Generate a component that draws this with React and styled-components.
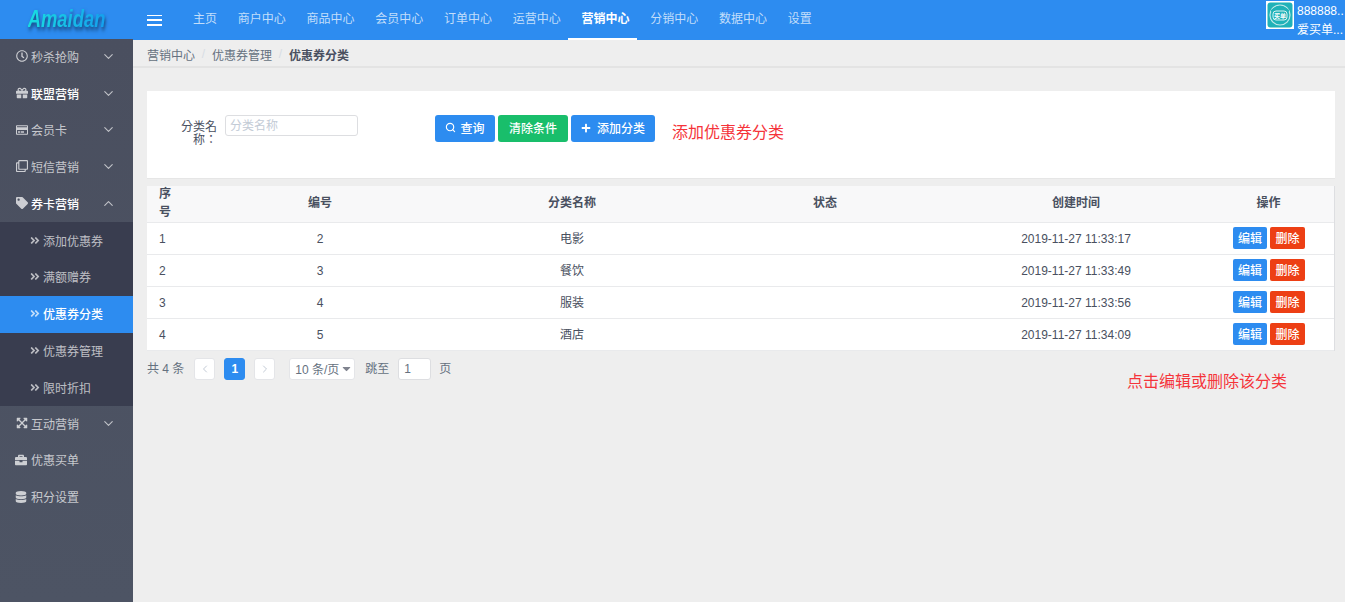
import styled, { createGlobalStyle } from "styled-components";
import {
  FaRegClock,
  FaGift,
  FaRegCreditCard,
  FaRegClone,
  FaTag,
  FaExpandArrowsAlt,
  FaBriefcase,
  FaDatabase,
  FaAngleDoubleRight,
  FaPlus,
  FaCaretDown,
} from "react-icons/fa";
import { ChevronDown, ChevronUp, ChevronLeft, ChevronRight, Search } from "lucide-react";

const GlobalStyle = createGlobalStyle`
  html, body {
    margin: 0;
    padding: 0;
    height: 100%;
    overflow: hidden;
    background: #eeeeee;
    font-family: "Liberation Sans", "Noto Sans CJK SC", sans-serif;
    font-size: 12px;
    color: #495060;
  }
  * {
    box-sizing: border-box;
  }
`;

const Page = styled.div`
  width: 1345px;
  height: 602px;
  display: flex;
  flex-direction: column;
`;

const TopBar = styled.header`
  height: 40px;
  flex: none;
  background: #2d8cf0;
  display: flex;
  align-items: center;
  margin-bottom: -1px;
  position: relative;
  z-index: 0;
`;

const LogoBox = styled.div`
  width: 133px;
  height: 39px;
  flex: none;
  align-self: flex-start;
  display: flex;
  align-items: center;
  justify-content: center;
`;

const Logo = styled.span`
  font-size: 23px;
  font-weight: bold;
  font-style: italic;
  display: inline-block;
  transform: scaleX(0.8);
  background: linear-gradient(100deg, #19dfe0, #149fee);
  -webkit-background-clip: text;
  background-clip: text;
  color: transparent;
  filter: drop-shadow(1px 3px 2px #123f70);
`;

const Burger = styled.button`
  width: 15px;
  height: 11px;
  margin-left: 14px;
  margin-right: 20.6px;
  padding: 0;
  border: 0;
  background: transparent;
  display: flex;
  flex-direction: column;
  justify-content: space-between;
  span {
    display: block;
    height: 1.5px;
    background: #fff;
  }
`;

const Nav = styled.nav`
  display: flex;
  align-self: stretch;
  flex: 1;
`;

const NavItem = styled.a`
  position: relative;
  padding: 0 10.39px;
  height: 40px;
  line-height: 39px;
  color: ${(p) => (p.$active ? "#fff" : "rgba(255,255,255,.72)")};
  font-weight: ${(p) => (p.$active ? "bold" : "normal")};
  &::after {
    content: "";
    display: ${(p) => (p.$active ? "block" : "none")};
    position: absolute;
    left: -3px;
    right: 3px;
    bottom: 0;
    height: 2px;
    background: #fff;
  }
`;

const UserBox = styled.div`
  width: 79px;
  height: 39px;
  flex: none;
  display: flex;
  align-self: flex-start;
  padding-top: 1px;
`;

const Avatar = styled.svg`
  width: 28px;
  height: 28px;
  flex: none;
  margin-right: 3px;
`;

const UserText = styled.div`
  width: 48px;
  margin-top: 1px;
  color: #fff;
  line-height: 19px;
  font-size: 12px;
  white-space: nowrap;
`;

const Body = styled.div`
  flex: 1;
  display: flex;
  min-height: 0;
`;

const Sidebar = styled.aside`
  width: 133px;
  flex: none;
  position: relative;
  background: linear-gradient(180deg, #4a4f5f 0%, #4d5464 100%);
`;

const MenuItem = styled.div`
  height: 36.7px;
  display: flex;
  align-items: center;
  padding-bottom: 2px;
  padding-left: ${(p) => (p.$tight ? "15px" : "16px")};
  color: ${(p) => (p.$bright ? "#fff" : "rgba(255,255,255,.7)")};
  font-weight: ${(p) => (p.$bright ? "500" : "normal")};
  svg.lead {
    width: 12px;
    height: 12px;
    flex: none;
    margin-right: ${(p) => (p.$tight ? "4px" : "3px")};
    color: rgba(255,255,255,.72);
  }
  svg.arrow {
    position: absolute;
    left: 101px;
    width: 15px;
    height: 15px;
    stroke-width: 1.8;
    color: rgba(255,255,255,.65);
  }
`;

const SubMenu = styled.div`
  background: #393d4f;
`;

const SubItem = styled.div`
  height: 36.7px;
  display: flex;
  align-items: center;
  padding-bottom: 1px;
  padding-left: 30px;
  color: ${(p) => (p.$active ? "#fff" : "rgba(255,255,255,.68)")};
  background: ${(p) => (p.$active ? "#2d8cf0" : "transparent")};
  font-weight: ${(p) => (p.$active ? "500" : "normal")};
  svg {
    width: 10px;
    height: 11px;
    margin-right: 3px;
    color: ${(p) => (p.$active ? "rgba(255,255,255,.7)" : "rgba(255,255,255,.65)")};
  }
`;

const Main = styled.main`
  flex: 1;
  min-width: 0;
  margin-top: 1px;
`;

const Crumbs = styled.div`
  height: 28px;
  background: #eeeeee;
  border-bottom: 2px solid #e3e3e3;
  display: flex;
  align-items: center;
  padding-left: 14px;
  padding-top: 2px;
  color: #657180;
`;

const CrumbSep = styled.span`
  margin: 0 6.8px;
  color: #d7dde4;
`;

const CrumbLast = styled.span`
  font-weight: bold;
  color: #495060;
`;

const Content = styled.div`
  padding: 23px 10px 0 14px;
`;

const FilterCard = styled.section`
  height: 88px;
  background: #fff;
  border-bottom: 1px solid #e6e6e6;
  display: flex;
  align-items: flex-start;
  padding-top: 24px;
`;

const FieldLabel = styled.label`
  width: 70px;
  padding-left: 30px;
  margin-top: 6px;
  text-align: right;
  line-height: 13px;
  font-family: "Liberation Sans", "Noto Sans CJK TC", sans-serif;
  color: #495060;
  flex: none;
`;

const FieldInput = styled.input`
  width: 133px;
  height: 21px;
  margin-left: 8px;
  padding: 0 4px;
  flex: none;
  border: 1px solid #dddee1;
  border-radius: 3px;
  outline: none;
  font: inherit;
  &::placeholder {
    color: #c3cbd6;
  }
`;

const ButtonRow = styled.div`
  display: flex;
  gap: 3px;
  margin-left: 77px;
`;

const Button = styled.button`
  height: 27px;
  width: ${(p) => p.$w}px;
  padding: 0 0 2px;
  border: 0;
  border-radius: 3px;
  background: ${(p) => p.$bg || "#2d8cf0"};
  color: #fff;
  font: inherit;
  font-weight: 500;
  display: flex;
  align-items: center;
  justify-content: center;
  svg {
    margin-right: ${(p) => p.$gap || 0}px;
  }
`;

const Note = styled.div`
  color: #f5343a;
  font-size: 16px;
  line-height: 22px;
`;

const TopNote = styled(Note)`
  margin-left: 17px;
  margin-top: 7px;
`;

const BottomNote = styled(Note)`
  margin: -9px 0 0 980px;
`;

const TableWrap = styled.div`
  margin-top: 7px;
  background: #fff;
  border-right: 1px solid #dddee1;
`;

const Table = styled.table`
  width: 100%;
  border-collapse: collapse;
  table-layout: fixed;
  th {
    height: 36px;
    background: #f8f8f9;
    font-weight: bold;
    color: #495060;
    text-align: center;
    padding: 0;
    line-height: 17.5px;
    border-bottom: 1px solid #e9eaec;
  }
  td {
    height: 32px;
    text-align: center;
    padding: 2px 0 0;
    color: #495060;
    border-bottom: 1px solid #e9eaec;
  }
  td:nth-child(3) {
    padding: 0 0 2px;
  }
  td:last-child {
    padding: 0;
  }
  th:first-child,
  td:first-child {
    text-align: left;
    padding-left: 12px;
  }
  th:first-child {
    padding-right: 18px;
  }
`;

const Actions = styled.div`
  display: flex;
  justify-content: center;
  gap: 3px;
  padding-left: 1px;
`;

const SmallButton = styled.button`
  width: ${(p) => p.$w}px;
  height: 22px;
  padding: 0 0 1px;
  border: 0;
  border-radius: 2px;
  background: ${(p) => p.$bg};
  color: #fff;
  font: inherit;
  font-weight: 500;
`;

const Pager = styled.div`
  display: flex;
  align-items: center;
  height: 22px;
  margin-top: 7px;
  color: #657180;
`;

const PagerText = styled.span`
  margin-left: ${(p) => p.$left || 0}px;
  margin-right: ${(p) => p.$right || 0}px;
  padding-bottom: 2px;
`;

const PageBtn = styled.div`
  width: 21px;
  height: 22px;
  border-radius: 3px;
  margin-right: 9px;
  display: flex;
  align-items: center;
  justify-content: center;
  background: ${(p) => (p.$active ? "#2d8cf0" : "#fff")};
  border: 1px solid ${(p) => (p.$active ? "#2d8cf0" : "#e4e5e8")};
  color: ${(p) => (p.$active ? "#fff" : "#c3cbd6")};
  font-weight: bold;
`;

const PageSelect = styled.div`
  width: 66px;
  height: 22px;
  margin-left: 5px;
  padding: 0 0 1px 5px;
  background: #fff;
  border: 1px solid #e4e5e8;
  border-radius: 3px;
  display: flex;
  align-items: center;
  white-space: nowrap;
  svg {
    color: #80848f;
    margin-left: 1px;
    flex: none;
  }
`;

const JumpInput = styled.div`
  width: 33px;
  height: 22px;
  margin: 0 8px 0 9px;
  background: #fff;
  border: 1px solid #dddee1;
  border-radius: 3px;
  line-height: 20px;
  padding-left: 5px;
`;

const navItems = ["主页", "商户中心", "商品中心", "会员中心", "订单中心", "运营中心", "营销中心", "分销中心", "数据中心", "设置"];

const rows = [
  { id: 1, no: 2, name: "电影", time: "2019-11-27 11:33:17" },
  { id: 2, no: 3, name: "餐饮", time: "2019-11-27 11:33:49" },
  { id: 3, no: 4, name: "服装", time: "2019-11-27 11:33:56" },
  { id: 4, no: 5, name: "酒店", time: "2019-11-27 11:34:09" },
];

const subItems = ["添加优惠券", "满额赠券", "优惠券分类", "优惠券管理", "限时折扣"];

const App = () => {
  return (
    <Page>
      <GlobalStyle />
      <TopBar>
        <LogoBox>
          <Logo>Amaidan</Logo>
        </LogoBox>
        <Burger aria-label="menu">
          <span />
          <span />
          <span />
        </Burger>
        <Nav>
          {navItems.map((item) => (
            <NavItem key={item} $active={item === "营销中心"}>
              {item}
            </NavItem>
          ))}
        </Nav>
        <UserBox>
          <Avatar viewBox="0 0 28 28">
            <rect width="28" height="28" fill="#fff" />
            <rect x="1.5" y="1.5" width="25" height="25" rx="3" fill="#20b2b8" />
            <circle cx="14" cy="14" r="10" fill="none" stroke="#bfe9ea" strokeWidth="1.2" />
            <path d="M5 11 Q14 3 23 11 L23 9 Q14 1 5 9Z" fill="#20b2b8" />
            <rect x="7" y="10" width="14" height="9" rx="3" fill="#20b2b8" stroke="#d6f3f3" strokeWidth="1" />
            <text x="14" y="17" fontSize="6" textAnchor="middle" fill="#fff" fontWeight="bold">买单</text>
          </Avatar>
          <UserText>
            <div>888888..</div>
            <div>爱买单...</div>
          </UserText>
        </UserBox>
      </TopBar>
      <Body>
        <Sidebar>
          <MenuItem>
            <FaRegClock className="lead" />
            秒杀抢购
            <ChevronDown className="arrow" />
          </MenuItem>
          <MenuItem $bright>
            <FaGift className="lead" />
            联盟营销
            <ChevronDown className="arrow" />
          </MenuItem>
          <MenuItem>
            <FaRegCreditCard className="lead" />
            会员卡
            <ChevronDown className="arrow" />
          </MenuItem>
          <MenuItem>
            <FaRegClone className="lead" />
            短信营销
            <ChevronDown className="arrow" />
          </MenuItem>
          <MenuItem $bright>
            <FaTag className="lead" />
            券卡营销
            <ChevronUp className="arrow" />
          </MenuItem>
          <SubMenu>
            {subItems.map((item) => (
              <SubItem key={item} $active={item === "优惠券分类"}>
                <FaAngleDoubleRight />
                {item}
              </SubItem>
            ))}
          </SubMenu>
          <MenuItem>
            <FaExpandArrowsAlt className="lead" />
            互动营销
            <ChevronDown className="arrow" />
          </MenuItem>
          <MenuItem $tight>
            <FaBriefcase className="lead" />
            优惠买单
          </MenuItem>
          <MenuItem $tight>
            <FaDatabase className="lead" />
            积分设置
          </MenuItem>
        </Sidebar>
        <Main>
          <Crumbs>
            <span>营销中心</span>
            <CrumbSep>/</CrumbSep>
            <span>优惠券管理</span>
            <CrumbSep>/</CrumbSep>
            <CrumbLast>优惠券分类</CrumbLast>
          </Crumbs>
          <Content>
            <FilterCard>
              <FieldLabel>分类名称：</FieldLabel>
              <FieldInput placeholder="分类名称" />
              <ButtonRow>
                <Button $w={60} $gap={4}>
                  <Search size={11} strokeWidth={2.5} />
                  查询
                </Button>
                <Button $w={70} $bg="#19be6b">
                  清除条件
                </Button>
                <Button $w={84} $gap={6}>
                  <FaPlus size={10} />
                  添加分类
                </Button>
              </ButtonRow>
              <TopNote>添加优惠券分类</TopNote>
            </FilterCard>
            <TableWrap>
              <Table>
                <colgroup>
                  <col style={{ width: 50 }} />
                  <col style={{ width: 246 }} />
                  <col style={{ width: 258 }} />
                  <col style={{ width: 248 }} />
                  <col style={{ width: 254 }} />
                  <col />
                </colgroup>
                <thead>
                  <tr>
                    <th>序号</th>
                    <th>编号</th>
                    <th>分类名称</th>
                    <th>状态</th>
                    <th>创建时间</th>
                    <th>操作</th>
                  </tr>
                </thead>
                <tbody>
                  {rows.map((row) => (
                    <tr key={row.id}>
                      <td>{row.id}</td>
                      <td>{row.no}</td>
                      <td>{row.name}</td>
                      <td></td>
                      <td>{row.time}</td>
                      <td>
                        <Actions>
                          <SmallButton $w={34} $bg="#2d8cf0">编辑</SmallButton>
                          <SmallButton $w={35} $bg="#ed3f14">删除</SmallButton>
                        </Actions>
                      </td>
                    </tr>
                  ))}
                </tbody>
              </Table>
            </TableWrap>
            <Pager>
              <PagerText $right={10}>共 4 条</PagerText>
              <PageBtn>
                <ChevronLeft size={12} />
              </PageBtn>
              <PageBtn $active>1</PageBtn>
              <PageBtn>
                <ChevronRight size={12} />
              </PageBtn>
              <PageSelect>
                10 条/页
                <FaCaretDown size={13} />
              </PageSelect>
              <PagerText $left={10}>跳至</PagerText>
              <JumpInput>1</JumpInput>
              <PagerText>页</PagerText>
            </Pager>
            <BottomNote>点击编辑或删除该分类</BottomNote>
          </Content>
        </Main>
      </Body>
    </Page>
  );
};

export default App;
